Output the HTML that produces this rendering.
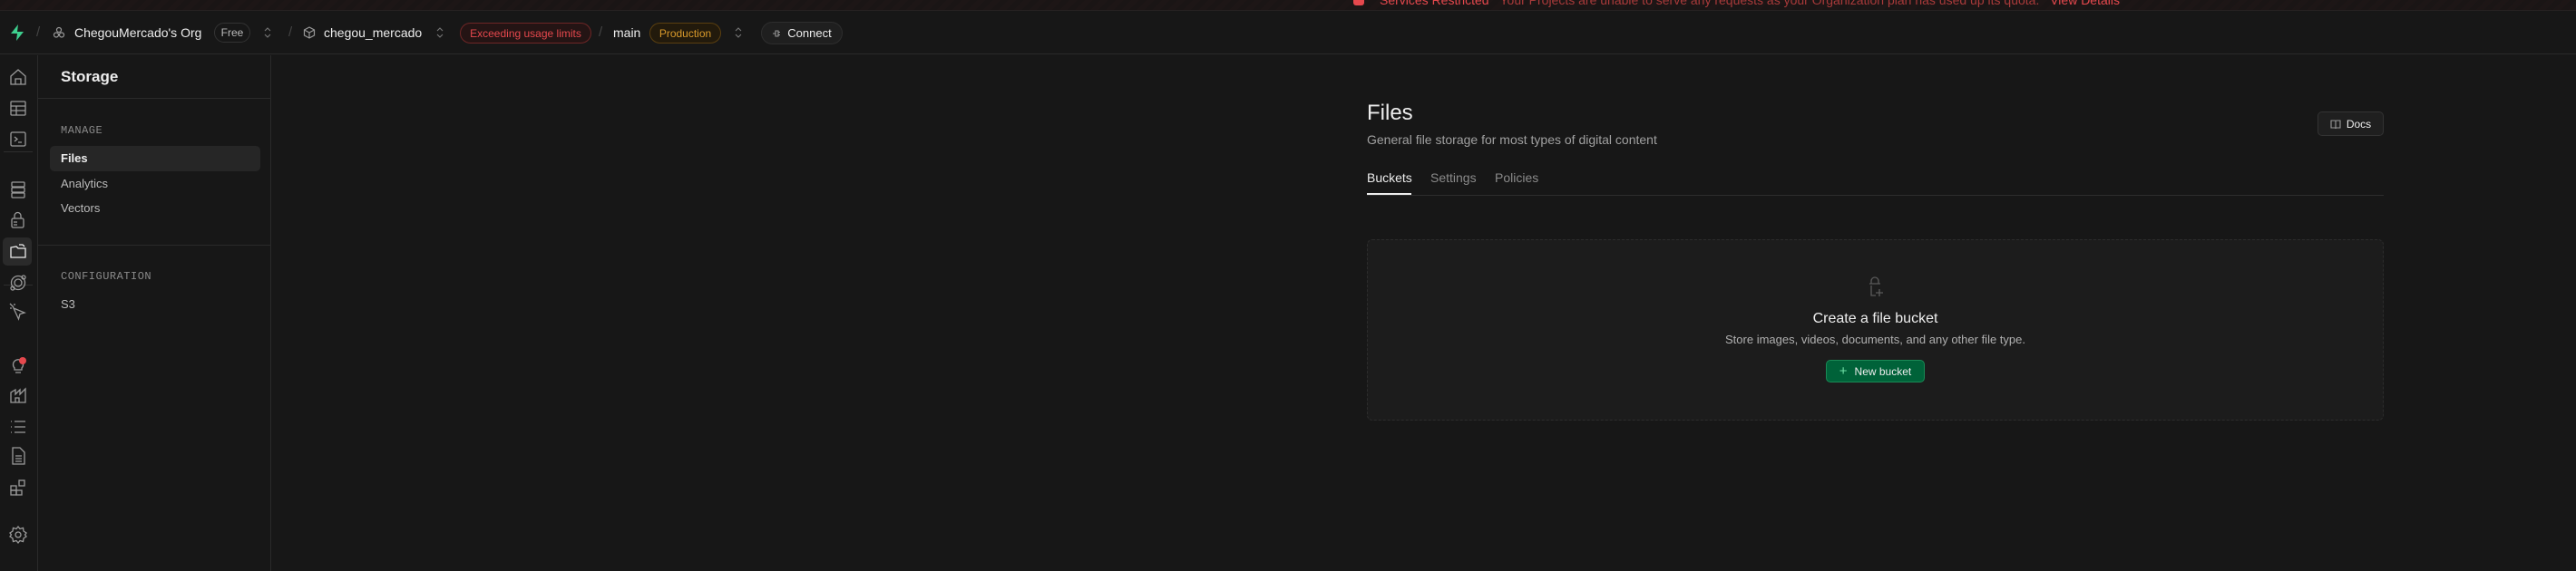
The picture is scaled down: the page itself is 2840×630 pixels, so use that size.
<!DOCTYPE html>
<html><head><meta charset="utf-8"><style>
*{box-sizing:border-box;margin:0;padding:0}
body{width:2840px;height:630px;overflow:hidden;background:#171717;font-family:"Liberation Sans",sans-serif;color:#ededed;position:relative}
.a{position:absolute;white-space:nowrap}
.banner{position:absolute;left:0;top:0;width:2840px;height:12px;background:repeating-linear-gradient(135deg,#1a1515 0 6px,#1d1616 6px 12px);border-bottom:1px solid #262222}
.hdr{position:absolute;left:0;top:12px;width:2840px;height:48px;border-bottom:1px solid #2a2a2a;background:#171717}
.pill{position:absolute;border-radius:13px;font-size:12px;display:flex;align-items:center;justify-content:center}
.sl{color:#444;font-size:15px}
.rail{position:absolute;left:0;top:61px;width:42px;height:569px;border-right:1px solid #2a2a2a}
.side{position:absolute;left:42px;top:61px;width:257px;height:569px;border-right:1px solid #2a2a2a}
svg{display:block}
</style></head><body>
<div class="banner"></div>
<div class="a" style="left:1492px;top:-6px;width:12px;height:12px;background:#e5484d;border-radius:3px"></div>
<div class="a" style="left:1521px;top:-8px;font-size:14px;color:#e5484d">Services Restricted <span style="color:#a83a3a;margin-left:8px">Your Projects are unable to serve any requests as your Organization plan has used up its quota.</span> <span style="margin-left:8px">View Details</span></div>

<div class="hdr"></div>
<svg class="a" style="left:10px;top:26px" width="18" height="20" viewBox="0 0 18 20"><path d="M10 1 L2 11 H9 L8 19 L16 9 H9 Z" fill="#3ecf8e"/></svg>
<div class="a sl" style="left:40px;top:27px">/</div>
<svg class="a" style="left:58px;top:29px" width="14" height="14" viewBox="0 0 14 14" fill="none" stroke="#999" stroke-width="1.2"><circle cx="7" cy="4" r="2.5"/><circle cx="4" cy="9.5" r="2.5"/><circle cx="10" cy="9.5" r="2.5"/></svg>
<div class="a" style="left:82px;top:28px;font-size:14px;color:#ededed">ChegouMercado's Org</div>
<div class="pill" style="left:236px;top:25px;width:40px;height:22px;border:1px solid #333;color:#bbb">Free</div>
<svg class="a" style="left:291px;top:29px" width="8" height="14" viewBox="0 0 8 14" fill="none" stroke="#777" stroke-width="1.1"><path d="M1 5 L4 2 L7 5 M1 9 L4 12 L7 9"/></svg>
<div class="a sl" style="left:318px;top:27px">/</div>
<svg class="a" style="left:334px;top:29px" width="14" height="14" viewBox="0 0 14 14" fill="none" stroke="#999" stroke-width="1.2"><path d="M7 1 L12.5 4 V10 L7 13 L1.5 10 V4 Z M1.5 4 L7 7 L12.5 4 M7 7 V13"/></svg>
<div class="a" style="left:357px;top:28px;font-size:14px">chegou_mercado</div>
<svg class="a" style="left:481px;top:29px" width="8" height="14" viewBox="0 0 8 14" fill="none" stroke="#777" stroke-width="1.1"><path d="M1 5 L4 2 L7 5 M1 9 L4 12 L7 9"/></svg>
<div class="pill" style="left:507px;top:25px;width:145px;height:23px;border:1px solid #6e2626;background:#241414;color:#e5484d">Exceeding usage limits</div>
<div class="a sl" style="left:660px;top:27px">/</div>
<div class="a" style="left:676px;top:28px;font-size:14px">main</div>
<div class="pill" style="left:716px;top:25px;width:79px;height:23px;border:1px solid #5a3f10;background:#221a0c;color:#d99a2b">Production</div>
<svg class="a" style="left:810px;top:29px" width="8" height="14" viewBox="0 0 8 14" fill="none" stroke="#777" stroke-width="1.1"><path d="M1 5 L4 2 L7 5 M1 9 L4 12 L7 9"/></svg>
<div class="pill" style="left:839px;top:24px;width:90px;height:25px;border:1px solid #2e2e2e;background:#1f1f1f;color:#ededed;font-size:13px"><svg style="margin-right:7px" width="10" height="10" viewBox="0 0 10 10" fill="none" stroke="#999" stroke-width="1.1"><path d="M4 2 H7 V8 H4 Z M1 5 H4 M7 3.5 H9 M7 6.5 H9"/></svg>Connect</div>

<div class="rail">
<div style="position:absolute;left:4px;top:106px;width:32px;border-top:1px solid #2e2e2e"></div>
<div style="position:absolute;left:4px;top:253px;width:32px;border-top:1px solid #2e2e2e"></div>
<div style="position:absolute;left:3px;top:201px;width:32px;height:31px;background:#2a2a2a;border-radius:5px"></div>
</div>
<svg class="a" style="left:9px;top:74px" width="22" height="540" viewBox="0 0 22 540" fill="none" stroke="#9a9a9a" stroke-width="1.3">
<path d="M3 10 L11 3 L19 10 V19 H3 Z M8 19 V13 H14 V19"/>
<g transform="translate(0,35)"><rect x="3" y="3" width="16" height="15" rx="1"/><path d="M3 8 H19 M3 13 H19 M9 8 V18"/></g>
<g transform="translate(0,69)"><rect x="3" y="3" width="16" height="15" rx="1.5"/><path d="M7 8 L10 10.5 L7 13 M11 14 H15"/></g>
<g transform="translate(0,125)"><rect x="4" y="2" width="14" height="5" rx="1"/><rect x="4" y="8" width="14" height="5" rx="1"/><rect x="4" y="14" width="14" height="5" rx="1"/></g>
<g transform="translate(0,158)"><rect x="4" y="9" width="13" height="10" rx="1.5"/><path d="M7 9 V6 A3.5 3.5 0 0 1 14 6 V9 M6 13 H10 M6 16 H10"/></g>
<g transform="translate(0,192)" stroke="#ededed"><path d="M3 7 V18 H19 V8 H11 L9 6 Z M12 4 H16 L18 6"/></g>
<g transform="translate(0,227)"><circle cx="11" cy="11" r="7.5"/><circle cx="11" cy="11" r="4"/><circle cx="17" cy="5" r="2"/><circle cx="5" cy="17" r="2"/></g>
<g transform="translate(0,259)"><path d="M6 7 L18 12 L13 13.5 L11.5 19 Z M2 2 L6 6 M7 2 V4 M2 7 H4"/></g>
<g transform="translate(0,317)"><path d="M7 15 A5.5 5.5 0 1 1 15 15 V17 H7 Z M8 20 H14"/></g>
<g transform="translate(0,351)"><path d="M3 19 V8 L8 5 V10 L13 5 V10 L19 4 V19 Z M8 19 V14 H12 V19"/></g>
<g transform="translate(0,386)"><path d="M7 5 H19 M7 11 H19 M7 17 H19 M3 5 H4 M3 11 H4 M3 17 H4"/></g>
<g transform="translate(0,418)"><path d="M5 2 H13 L18 7 V20 H5 Z M8 11 H15 M8 14 H15 M8 17 H15"/></g>
<g transform="translate(0,453)"><rect x="3" y="9" width="6" height="5"/><rect x="3" y="14" width="6" height="5"/><rect x="9" y="14" width="6" height="5"/><rect x="12" y="3" width="6" height="6"/></g>
<g transform="translate(0,505)"><circle cx="11" cy="11" r="3"/><path d="M11 2 L13 4.5 L16.5 3.5 L17 7 L20 9 L18.5 11 L20 13 L17 15 L16.5 18.5 L13 17.5 L11 20 L9 17.5 L5.5 18.5 L5 15 L2 13 L3.5 11 L2 9 L5 7 L5.5 3.5 L9 4.5 Z"/></g>
</svg>
<div class="a" style="left:21px;top:394px;width:8px;height:8px;border-radius:50%;background:#e5484d"></div>

<div class="side">
<div style="position:absolute;left:0;top:47px;width:256px;border-top:1px solid #2a2a2a"></div>
<div style="position:absolute;left:0;top:209px;width:256px;border-top:1px solid #2a2a2a"></div>
<div style="position:absolute;left:13px;top:100px;width:232px;height:28px;background:#262626;border-radius:5px"></div>
</div>
<div class="a" style="left:67px;top:75px;font-size:17px;font-weight:bold">Storage</div>
<div class="a" style="left:67px;top:137px;font-size:12px;color:#8a8a8a;font-family:'Liberation Mono',monospace;letter-spacing:.5px">MANAGE</div>
<div class="a" style="left:67px;top:167px;font-size:13px;font-weight:bold">Files</div>
<div class="a" style="left:67px;top:195px;font-size:13px;color:#bbb">Analytics</div>
<div class="a" style="left:67px;top:222px;font-size:13px;color:#bbb">Vectors</div>
<div class="a" style="left:67px;top:298px;font-size:12px;color:#8a8a8a;font-family:'Liberation Mono',monospace;letter-spacing:.5px">CONFIGURATION</div>
<div class="a" style="left:67px;top:328px;font-size:13px;color:#bbb">S3</div>

<div class="a" style="left:1507px;top:111px;font-size:24px">Files</div>
<div class="a" style="left:1507px;top:146px;font-size:14px;color:#a0a0a0">General file storage for most types of digital content</div>
<div class="a" style="left:2555px;top:123px;width:73px;height:27px;border:1px solid #333;border-radius:5px;background:#1f1f1f;font-size:12px;display:flex;align-items:center;justify-content:center"><svg style="margin-right:6px" width="12" height="12" viewBox="0 0 12 12" fill="none" stroke="#999" stroke-width="1.1"><path d="M1 2 H5 Q6 2 6 3 V11 Q6 10 5 10 H1 Z M11 2 H7 Q6 2 6 3 V11 Q6 10 7 10 H11 Z"/></svg>Docs</div>
<div class="a" style="left:1507px;top:188px;font-size:14px">Buckets</div>
<div class="a" style="left:1577px;top:188px;font-size:14px;color:#8a8a8a">Settings</div>
<div class="a" style="left:1648px;top:188px;font-size:14px;color:#8a8a8a">Policies</div>
<div class="a" style="left:1507px;top:215px;width:1121px;border-top:1px solid #2e2e2e"></div>
<div class="a" style="left:1507px;top:213px;width:49px;height:2px;background:#ededed"></div>

<div class="a" style="left:1507px;top:264px;width:1121px;height:200px;background:#1c1c1c;border:1px dashed #2c2c2c;border-radius:6px"></div>
<svg class="a" style="left:2058px;top:305px" width="20" height="24" viewBox="0 0 20 24" fill="none" stroke="#5a5a5a" stroke-width="1.3"><path d="M5 8 V5 A4 4 0 0 1 13 5 V8 M3 8 H15 M5 10 V21 H10 M14 14 V22 M10 18 H18"/></svg>
<div class="a" style="left:1507px;top:343px;width:1121px;text-align:center;font-size:16px">Create a file bucket</div>
<div class="a" style="left:1507px;top:367px;width:1121px;text-align:center;font-size:13px;color:#b0b0b0">Store images, videos, documents, and any other file type.</div>
<div class="a" style="left:2013px;top:397px;width:109px;height:25px;background:#006239;border:1px solid #1a8a56;border-radius:5px;font-size:12px;display:flex;align-items:center;justify-content:center"><span style="color:#6fe0a6;margin-right:8px;font-size:15px">+</span>New bucket</div>
</body></html>
